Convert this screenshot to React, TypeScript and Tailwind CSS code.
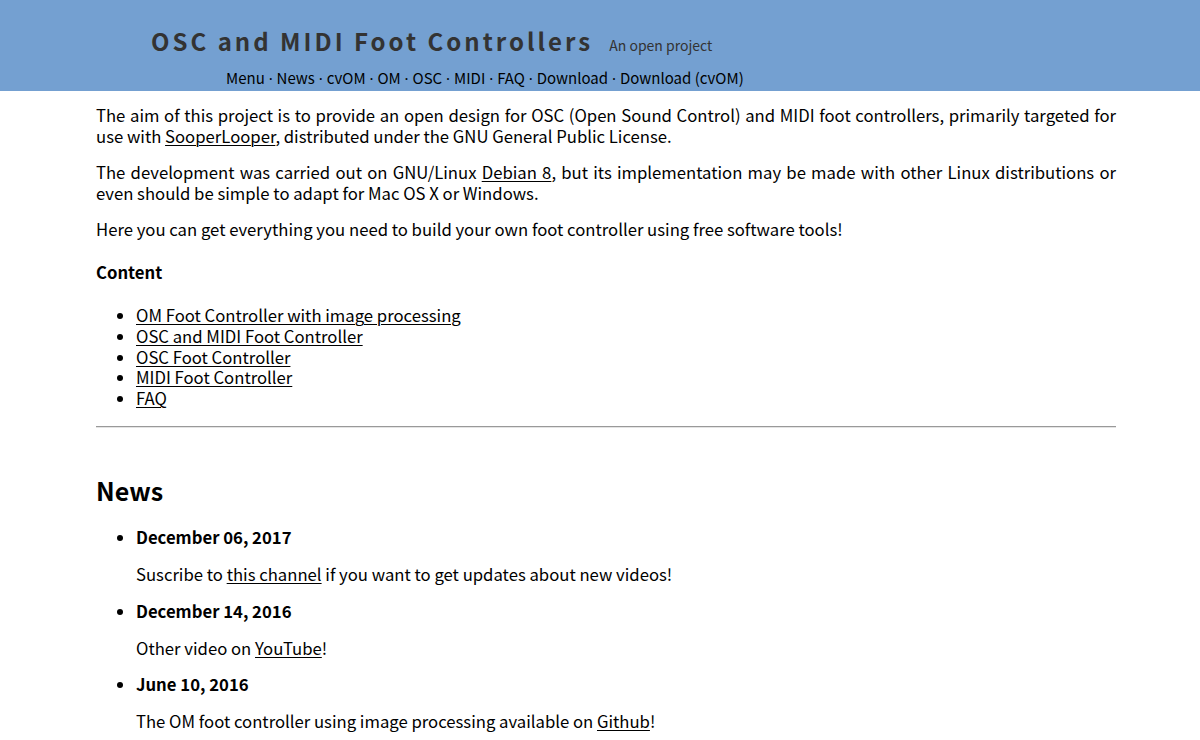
import React from "react";

const font = "'Noto Sans CJK SC', 'Noto Sans', sans-serif";

function A({ children }: { children: React.ReactNode }) {
  return (
    <a href="#" className="text-black underline decoration-1 underline-offset-[2px]">
      {children}
    </a>
  );
}

const navItems = ["Menu", "News", "cvOM", "OM", "OSC", "MIDI", "FAQ", "Download", "Download (cvOM)"];

const news = [
  {
    date: "December 06, 2017",
    body: (
      <>
        Suscribe to <A>this channel</A> if you want to get updates about new videos!
      </>
    ),
  },
  {
    date: "December 14, 2016",
    body: (
      <>
        Other video on <A>YouTube</A>!
      </>
    ),
  },
  {
    date: "June 10, 2016",
    body: (
      <>
        The OM foot controller using image processing available on <A>Github</A>!
      </>
    ),
  },
];

export default function App() {
  return (
    <div className="min-h-[740px] bg-white text-black text-[16.7px] leading-[20.7px]" style={{ fontFamily: font }}>
      <header className="h-[91px] bg-[#74a0d1] overflow-hidden">
        <div className="pl-[151px] pt-[28px] flex items-baseline">
          <h1 className="text-[24px] leading-[26px] font-bold tracking-[3px] text-[#333333]">
            OSC and MIDI Foot Controllers
          </h1>
          <span className="ml-[16px] text-[14px] leading-[26px] text-[#333333]">An open project</span>
        </div>
        <nav className="ml-[226px] mt-[10px] text-[15px] leading-[20px] text-black whitespace-nowrap">
          {navItems.map((n, i) => (
            <span key={n}>
              {i > 0 && <span className="font-['Noto_Sans',sans-serif]"> · </span>}
              <a href="#" className="text-black no-underline">{n}</a>
            </span>
          ))}
        </nav>
      </header>

      <main className="pl-[96px] pr-[84px] pt-[14px]">
        <p className="text-justify mb-[15.5px]">
          The aim of this project is to provide an open design for OSC (Open Sound Control) and MIDI foot controllers, primarily targeted for use with <A>SooperLooper</A>, distributed under the GNU General Public License.
        </p>
        <p className="text-justify mb-[15.5px]">
          The development was carried out on GNU/Linux <A>Debian 8</A>, but its implementation may be made with other Linux distributions or even should be simple to adapt for Mac OS X or Windows.
        </p>
        <p>Here you can get everything you need to build your own foot controller using free software tools!</p>

        <h4 className="font-bold mt-[22px]">Content</h4>
        <ul className="list-disc pl-[40px] mt-[22.7px] leading-[20.8px]">
          <li><A>OM Foot Controller with image processing</A></li>
          <li><A>OSC and MIDI Foot Controller</A></li>
          <li><A>OSC Foot Controller</A></li>
          <li><A>MIDI Foot Controller</A></li>
          <li><A>FAQ</A></li>
        </ul>

        <hr className="mt-[17px] border-0 border-t border-t-[#999999] border-b border-b-[#e4e4e4]" />

        <h2 className="mt-[47px] text-[25px] leading-[30px] font-bold">News</h2>
        <ul className="list-disc pl-[40px] mt-[22.5px]">
          {news.map((n) => (
            <li key={n.date} className="mb-[15.8px]">
              <b className="font-bold">{n.date}</b>
              <p className="mt-[16.3px]">{n.body}</p>
            </li>
          ))}
        </ul>
      </main>
    </div>
  );
}
